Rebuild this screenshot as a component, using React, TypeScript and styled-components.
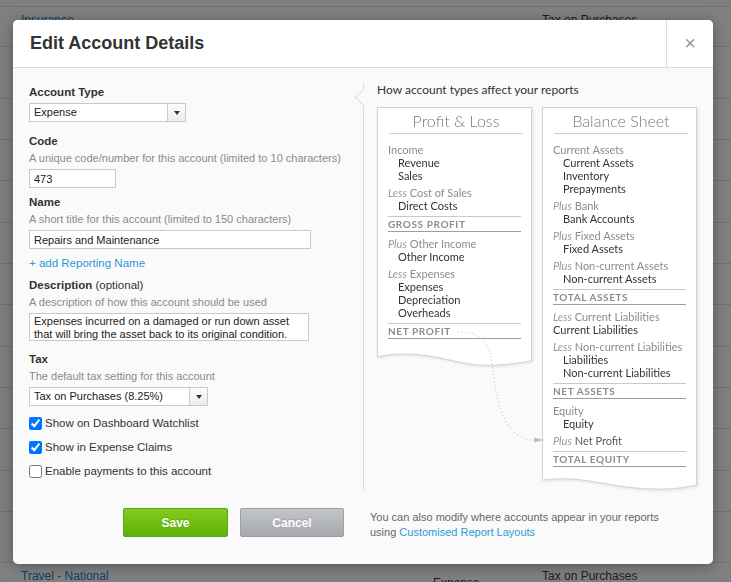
import React from 'react';
import styled, { createGlobalStyle } from 'styled-components';

const GlobalStyle = createGlobalStyle`
  html, body { margin: 0; padding: 0; }
  body {
    background: #808080;
    font-family: "Liberation Sans", Arial, sans-serif;
    overflow: hidden;
  }
`;

const Page = styled.div`
  position: relative;
  width: 731px;
  height: 582px;
  overflow: hidden;
`;

/* ---- background list, dimmed by the modal ---- */

const BgRow = styled.div<{ $h: number }>`
  box-sizing: border-box;
  height: ${(p) => p.$h}px;
  border-bottom: 1px solid #717171;
  display: grid;
  grid-template-columns: 412px 109px 1fr;
  padding: 6px 0 0 21px;
  font-size: 12px;
  line-height: 14px;
  &:last-child { border-bottom: 0; }
`;

const BgName = styled.span`
  color: #123f5c;
`;

const BgType = styled.span`
  color: #1c1c1c;
  padding-top: 7px;
`;

const BgTax = styled.span`
  color: #1c1c1c;
`;

/* ---- dialog ---- */

const Dialog = styled.div`
  position: absolute;
  left: 13px;
  top: 20px;
  width: 700px;
  height: 544px;
  background: #fafafa;
  border-radius: 5px;
  box-shadow: 0 2px 14px rgba(0, 0, 0, 0.35);
  overflow: hidden;
  display: flex;
  flex-direction: column;
`;

const Header = styled.div`
  box-sizing: border-box;
  height: 48px;
  display: flex;
  background: #fff;
  border-bottom: 1px solid #dcdcdc;
`;

const Title = styled.h1`
  flex: 1;
  margin: 0;
  padding-left: 17px;
  font-size: 18px;
  font-weight: bold;
  line-height: 47px;
  color: #333;
`;

const Close = styled.button`
  width: 47px;
  border: 0;
  border-left: 1px solid #dcdcdc;
  background: transparent;
  color: #9a9a9a;
  font-family: "Liberation Sans", Arial, sans-serif;
  font-size: 20px;
  padding: 0;
`;

const Body = styled.div`
  display: flex;
  align-items: flex-start;
  padding: 15px 0 0 16px;
`;

const Form = styled.div`
  width: 334px;
  padding-top: 2px;
  display: flex;
  flex-direction: column;
  align-items: flex-start;
`;

const Label = styled.div<{ $mt?: number }>`
  margin-top: ${(p) => p.$mt ?? 0}px;
  font-size: 11.5px;
  font-weight: bold;
  line-height: 14px;
  color: #333;
`;

const Optional = styled.span`
  font-weight: normal;
`;

const Help = styled.div`
  margin-top: 3px;
  font-size: 11px;
  line-height: 14px;
  color: #8a8a8a;
`;

const TextInput = styled.input<{ $w: number; $mt?: number }>`
  box-sizing: border-box;
  width: ${(p) => p.$w}px;
  height: 19px;
  margin: ${(p) => p.$mt ?? 4}px 0 0;
  padding: 0 4px;
  border: 1px solid #c9c9c9;
  background: #fff;
  font-family: "Liberation Sans", Arial, sans-serif;
  font-size: 11px;
  color: #222;
  outline: none;
`;

const TextArea = styled.textarea`
  box-sizing: border-box;
  width: 280px;
  height: 28px;
  margin: 4px 0 0;
  padding: 1px 4px;
  border: 1px solid #c9c9c9;
  background: #fff;
  font-family: "Liberation Sans", Arial, sans-serif;
  font-size: 11px;
  line-height: 13px;
  color: #222;
  resize: none;
  overflow: hidden;
  outline: none;
`;

const SelectBox = styled.div<{ $w: number }>`
  box-sizing: border-box;
  width: ${(p) => p.$w}px;
  height: 19px;
  margin-top: 4px;
  display: flex;
  border: 1px solid #c9c9c9;
  background: #fff;
  font-size: 11px;
  color: #222;
`;

const SelectValue = styled.span`
  flex: 1;
  padding-left: 4px;
  line-height: 17px;
`;

const SelectArrow = styled.span`
  width: 17px;
  border-left: 1px solid #d0d0d0;
  background: linear-gradient(#fdfdfd, #ececec);
  display: flex;
  align-items: center;
  justify-content: center;
  &::after {
    content: '';
    border-left: 3.5px solid transparent;
    border-right: 3.5px solid transparent;
    border-top: 4px solid #333;
  }
`;

const AddLink = styled.a`
  margin-top: 7px;
  font-size: 11.5px;
  line-height: 14px;
  color: #2b9bd4;
  text-decoration: none;
`;

const CheckRow = styled.label<{ $first?: boolean }>`
  height: 24px;
  margin-top: ${(p) => (p.$first ? 5 : 0)}px;
  display: flex;
  align-items: center;
  gap: 3px;
  font-size: 11.5px;
  color: #333;
`;

const Check = styled.input`
  width: 13px;
  height: 13px;
  margin: 0;
`;

/* ---- right column: reports diagram ---- */

const Side = styled.div`
  position: relative;
  border-left: 1px solid #dcdcdc;
  padding-left: 13px;
  font-family: Lato, "Liberation Sans", sans-serif;
  &::before {
    content: '';
    position: absolute;
    left: -7px;
    top: 9px;
    width: 11px;
    height: 11px;
    box-sizing: border-box;
    background: #fafafa;
    border-left: 1px solid #dcdcdc;
    border-bottom: 1px solid #dcdcdc;
    transform: rotate(45deg);
  }
`;

const SideTitle = styled.div`
  font-size: 12px;
  line-height: 14px;
  color: #333;
`;

const Reports = styled.div`
  position: relative;
  margin-top: 10px;
  display: flex;
  align-items: flex-start;
  gap: 10px;
`;

const Sheet = styled.div`
  width: 155px;
  filter: drop-shadow(1px 1px 1.5px rgba(0, 0, 0, 0.1));
`;

const SheetBody = styled.div<{ $pb: number }>`
  background: #fff;
  border: 1px solid #d2d2d2;
  border-bottom: 0;
  padding: 0 10px ${(p) => p.$pb}px;
`;

const SheetTitle = styled.div`
  box-sizing: border-box;
  height: 26px;
  line-height: 25px;
  text-align: center;
  font-size: 16px;
  font-weight: 300;
  color: #7a7a7a;
  border-bottom: 1px solid #cfcfcf;
  margin: 0 -2px 9px 1px;
`;

const Group = styled.div`
  font-size: 11px;
  line-height: 13px;
  & + & { margin-top: 4px; }
`;

const GroupHead = styled.div<{ $dark?: boolean }>`
  color: ${(p) => (p.$dark ? '#5a5a5a' : '#8c8c8c')};
  white-space: nowrap;
`;

const Qualifier = styled.em`
  color: #9a9a9a;
`;

const Item = styled.div<{ $flat?: boolean }>`
  padding-left: ${(p) => (p.$flat ? 0 : 10)}px;
  color: #333;
  white-space: nowrap;
`;

const Total = styled.div`
  margin: 4px 0 5px;
  border-top: 1px solid #c9c9c9;
  border-bottom: 1px solid #9c9c9c;
  font-size: 10px;
  font-weight: bold;
  line-height: 14px;
  letter-spacing: 0.6px;
  text-transform: uppercase;
  color: #8c8c8c;
  &:last-child { margin-bottom: 0; }
`;

const Flow = styled.svg`
  position: absolute;
  left: 0;
  top: 0;
  overflow: visible;
  pointer-events: none;
`;

/* ---- footer ---- */

const Footer = styled.div`
  display: flex;
  align-items: flex-start;
  padding: 18px 0 0 110px;
`;

const Button = styled.button<{ $kind: 'save' | 'cancel' }>`
  box-sizing: border-box;
  width: ${(p) => (p.$kind === 'save' ? 105 : 104)}px;
  height: 29px;
  margin-right: ${(p) => (p.$kind === 'save' ? 12 : 26)}px;
  border-radius: 2px;
  border: 1px solid ${(p) => (p.$kind === 'save' ? '#58a51a' : '#9a9da1')};
  background: ${(p) =>
    p.$kind === 'save'
      ? 'linear-gradient(#82cc1c, #5eb10a)'
      : 'linear-gradient(#c3c5c8, #a5a8ac)'};
  color: #fff;
  font-family: "Liberation Sans", Arial, sans-serif;
  font-size: 12px;
  font-weight: bold;
  text-shadow: 0 -1px 0 rgba(0, 0, 0, 0.15);
`;

const Note = styled.div`
  padding-top: 2px;
  font-size: 11px;
  line-height: 15px;
  color: #666;
`;

const NoteLink = styled.a`
  color: #2b9bd4;
  text-decoration: none;
`;

type Line = { q?: string; head: string; items?: string[]; flat?: boolean; dark?: boolean };
type Entry = Line | { total: string };

const profitLoss: Entry[] = [
  { head: 'Income', items: ['Revenue', 'Sales'] },
  { q: 'Less', head: 'Cost of Sales', items: ['Direct Costs'] },
  { total: 'Gross Profit' },
  { q: 'Plus', head: 'Other Income', items: ['Other Income'] },
  { q: 'Less', head: 'Expenses', items: ['Expenses', 'Depreciation', 'Overheads'] },
  { total: 'Net Profit' },
];

const balanceSheet: Entry[] = [
  { head: 'Current Assets', items: ['Current Assets', 'Inventory', 'Prepayments'] },
  { q: 'Plus', head: 'Bank', items: ['Bank Accounts'] },
  { q: 'Plus', head: 'Fixed Assets', items: ['Fixed Assets'] },
  { q: 'Plus', head: 'Non-current Assets', items: ['Non-current Assets'] },
  { total: 'Total Assets' },
  { q: 'Less', head: 'Current Liabilities', items: ['Current Liabilities'], flat: true },
  { q: 'Less', head: 'Non-current Liabilities', items: ['Liabilities', 'Non-current Liabilities'] },
  { total: 'Net Assets' },
  { head: 'Equity', items: ['Equity'] },
  { q: 'Plus', head: 'Net Profit', dark: true },
  { total: 'Total Equity' },
];

const bgRows = [
  { h: 6 },
  { h: 40, name: 'Insurance', tax: 'Tax on Purchases' },
  { h: 52 },
  { h: 41 }, { h: 41 }, { h: 42 }, { h: 41 }, { h: 41 },
  { h: 42 }, { h: 41 }, { h: 41 }, { h: 42 }, { h: 41 },
  { h: 51 },
  { h: 40, name: 'Travel - National', type: 'Expense', tax: 'Tax on Purchases' },
];

function Wave({ d }: { d: string }) {
  return (
    <svg width="155" height="13" viewBox="0 0 155 13" style={{ display: 'block' }}>
      <path d={`${d} V0 H0.5 Z`} fill="#fff" />
      <path d={d} fill="none" stroke="#d2d2d2" strokeWidth="1" />
    </svg>
  );
}

function Report({ title, entries, pb, wave }: { title: string; entries: Entry[]; pb: number; wave: string }) {
  return (
    <Sheet>
      <SheetBody $pb={pb}>
        <SheetTitle>{title}</SheetTitle>
        {entries.map((e, i) =>
          'total' in e ? (
            <Total key={i}>{e.total}</Total>
          ) : (
            <Group key={i}>
              <GroupHead $dark={e.dark}>
                {e.q && <Qualifier>{e.q}</Qualifier>}
                {e.q ? ' ' : ''}
                {e.head}
              </GroupHead>
              {e.items?.map((it) => (
                <Item key={it} $flat={e.flat}>
                  {it}
                </Item>
              ))}
            </Group>
          ),
        )}
      </SheetBody>
      <Wave d={wave} />
    </Sheet>
  );
}

export default function App() {
  return (
    <>
      <GlobalStyle />
      <Page>
        {bgRows.map((r, i) => (
          <BgRow key={i} $h={r.h}>
            <BgName>{r.name}</BgName>
            <BgType>{r.type}</BgType>
            <BgTax>{r.tax}</BgTax>
          </BgRow>
        ))}

        <Dialog>
          <Header>
            <Title>Edit Account Details</Title>
            <Close aria-label="Close">×</Close>
          </Header>

          <Body>
            <Form>
              <Label>Account Type</Label>
              <SelectBox $w={157}>
                <SelectValue>Expense</SelectValue>
                <SelectArrow />
              </SelectBox>

              <Label $mt={12}>Code</Label>
              <Help>A unique code/number for this account (limited to 10 characters)</Help>
              <TextInput $w={87} defaultValue="473" readOnly />

              <Label $mt={7}>Name</Label>
              <Help>A short title for this account (limited to 150 characters)</Help>
              <TextInput $w={282} defaultValue="Repairs and Maintenance" readOnly />

              <AddLink href="#">+ add Reporting Name</AddLink>

              <Label $mt={8}>
                Description <Optional>(optional)</Optional>
              </Label>
              <Help>A description of how this account should be used</Help>
              <TextArea
                readOnly
                defaultValue={'Expenses incurred on a damaged or run down asset\nthat will bring the asset back to its original condition.'}
              />

              <Label $mt={11}>Tax</Label>
              <Help>The default tax setting for this account</Help>
              <SelectBox $w={179}>
                <SelectValue>Tax on Purchases (8.25%)</SelectValue>
                <SelectArrow />
              </SelectBox>

              <CheckRow $first>
                <Check type="checkbox" defaultChecked />
                Show on Dashboard Watchlist
              </CheckRow>
              <CheckRow>
                <Check type="checkbox" defaultChecked />
                Show in Expense Claims
              </CheckRow>
              <CheckRow>
                <Check type="checkbox" />
                Enable payments to this account
              </CheckRow>
            </Form>

            <Side>
              <SideTitle>How account types affect your reports</SideTitle>
              <Reports>
                <Report
                  title="Profit & Loss"
                  entries={profitLoss}
                  pb={14}
                  wave="M0.5,0 V4 C12,1 26,0 45,2 C70,5 86,12 110,12.3 C130,12.5 145,9 154.5,8 V0"
                />
                <Report
                  title="Balance Sheet"
                  entries={balanceSheet}
                  pb={10}
                  wave="M0.5,0 V3 C18,0.5 38,2 60,6 C80,10 100,12.5 124,12 C140,11.5 148,9 154.5,8 V0"
                />
                <Flow width="170" height="340">
                  <path
                    d="M81,225 C103,225 113,233 116,263 C120,298 128,333 158,333"
                    fill="none"
                    stroke="#bdbdbd"
                    strokeWidth="1"
                    strokeDasharray="1 2.5"
                  />
                  <polygon points="157,330.5 168,333 157,335.5" fill="#c4c4c4" />
                </Flow>
              </Reports>
            </Side>
          </Body>

          <Footer>
            <Button $kind="save">Save</Button>
            <Button $kind="cancel">Cancel</Button>
            <Note>
              You can also modify where accounts appear in your reports
              <br />
              using <NoteLink href="#">Customised Report Layouts</NoteLink>
            </Note>
          </Footer>
        </Dialog>
      </Page>
    </>
  );
}
